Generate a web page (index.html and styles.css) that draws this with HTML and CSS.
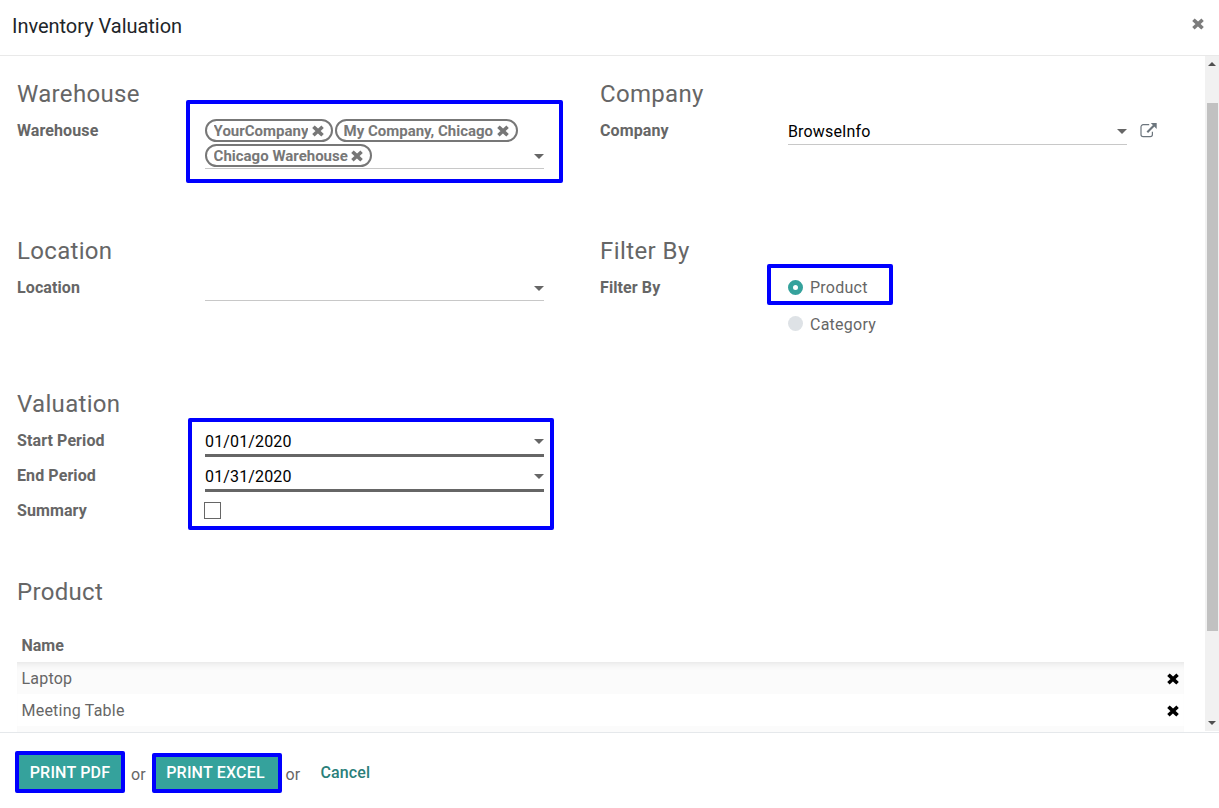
FILE: index.html
```html
<!DOCTYPE html>
<html lang="en">
<head>
<meta charset="utf-8">
<title>Inventory Valuation</title>
<link rel="stylesheet" href="styles.css">
</head>
<body>
<svg class="defs" width="0" height="0">
  <symbol id="times" viewBox="0 0 12 12"><path d="M2.7 2.9 9.3 9.1M9.3 2.9 2.7 9.1" fill="none" stroke="currentColor" stroke-width="3.5" stroke-linecap="square" stroke-linejoin="round"/></symbol>
  <symbol id="caret" viewBox="0 0 10 5"><path d="M0 0H10L5 5Z" fill="currentColor"/></symbol>
</svg>
<div class="modal">
  <header class="modal-header">
    <h4 class="modal-title">Inventory Valuation</h4>
    <svg class="icon close"><use href="#times"/></svg>
  </header>
  <main class="modal-body">
    <div class="sheet">
      <div class="groups">
        <section class="group group-first">
          <h2 class="group-title">Warehouse</h2>
          <div class="field">
            <label class="label">Warehouse</label>
            <div class="input tags">
              <span class="tag"><span class="tag-text">YourCompany</span><svg class="icon"><use href="#times"/></svg></span>
              <span class="tag"><span class="tag-text">My Company, Chicago</span><svg class="icon"><use href="#times"/></svg></span>
              <span class="tag"><span class="tag-text">Chicago Warehouse</span><svg class="icon"><use href="#times"/></svg></span>
              <svg class="caret tags-caret"><use href="#caret"/></svg>
            </div>
          </div>
          <div class="mark mark-warehouse"></div>
        </section>
        <section class="group">
          <h2 class="group-title">Company</h2>
          <div class="field">
            <label class="label">Company</label>
            <div class="input company"><span class="value browse">BrowseInfo</span><svg class="caret"><use href="#caret"/></svg></div>
            <svg class="external" viewBox="0 0 17 15"><path d="M9.2 1.7H3.2A2.2 2.2 0 0 0 1 3.900V11.500A2.200 2.200 0 0 0 3.200 13.700H10.200A2.200 2.200 0 0 0 12.400 11.500V8.800" fill="none" stroke="currentColor" stroke-width="1.200"/><path d="M7.300 9.200 14 2.500" stroke="currentColor" stroke-width="2.100"/><path d="M10.800 0H16.700V5.900Z" fill="currentColor"/></svg>
          </div>
        </section>
        <section class="group group-second">
          <h2 class="group-title">Location</h2>
          <div class="field">
            <label class="label">Location</label>
            <div class="input location"><svg class="caret"><use href="#caret"/></svg></div>
          </div>
        </section>
        <section class="group">
          <h2 class="group-title filter-title">Filter By</h2>
          <div class="field">
            <label class="label">Filter By</label>
            <div class="radios">
              <span class="radio"><i class="dot dot-on"></i><span class="radio-text">Product</span></span>
              <span class="radio"><i class="dot"></i><span class="radio-text">Category</span></span>
            </div>
          </div>
          <div class="mark mark-filter"></div>
        </section>
        <section class="group group-third">
          <h2 class="group-title">Valuation</h2>
          <div class="field">
            <label class="label">Start Period</label>
            <div class="input date"><span class="value">01/01/2020</span><svg class="caret"><use href="#caret"/></svg></div>
          </div>
          <div class="field">
            <label class="label">End Period</label>
            <div class="input date"><span class="value">01/31/2020</span><svg class="caret"><use href="#caret"/></svg></div>
          </div>
          <div class="field">
            <label class="label">Summary</label>
            <span class="checkbox"></span>
          </div>
          <div class="mark mark-dates"></div>
        </section>
      </div>
      <h2 class="group-title">Product</h2>
      <div class="table">
        <div class="head">Name</div>
        <div class="rows">
          <div class="row"><span class="cell">Laptop</span><svg class="icon"><use href="#times"/></svg></div>
          <div class="row"><span class="cell">Meeting Table</span><svg class="icon"><use href="#times"/></svg></div>
          <div class="row"></div>
        </div>
      </div>
    </div>
    <div class="scrollbar">
      <svg class="arrow" viewBox="0 0 8 4"><path d="M0 4 4 0 8 4Z"/></svg>
      <div class="thumb"></div>
      <svg class="arrow arrow-down" viewBox="0 0 8 4"><path d="M0 0 4 4 8 0Z"/></svg>
    </div>
  </main>
  <footer class="modal-footer">
    <button class="btn btn-pdf">PRINT PDF</button>
    <span class="or">or</span>
    <button class="btn btn-excel">PRINT EXCEL</button>
    <span class="or or-last">or</span>
    <a class="cancel">Cancel</a>
  </footer>
</div>
</body>
</html>
```
FILE: styles.css
```css
* { box-sizing: border-box; }
body { margin: 0; background: #fff; color: #666; font: 16px/24px Roboto, sans-serif; overflow: hidden; }
.defs { position: absolute; }
.modal { height: 808px; display: flex; flex-direction: column; }
.modal-header { height: 56px; border-bottom: 1px solid #e9e9e9; padding: 0 15px 4px 12px; display: flex; align-items: center; justify-content: space-between; }
.modal-title { margin: 0; font-size: 20px; font-weight: 400; color: #212529; letter-spacing: -.03px; }
.icon { width: 12px; height: 12px; flex: none; }
.close { color: #7c7c7c; margin-top: -4px; }
.modal-body { height: 676px; display: flex; overflow: hidden; }
.sheet { flex: 1; padding: 23px 21px 0 17px; }
.groups { display: grid; grid-template-columns: 583px 1fr; grid-template-rows: 157px 153px 188px; }
.group { position: relative; }
.group-title { margin: 0; height: 34px; line-height: 31px; font-size: 24px; letter-spacing: .32px; font-weight: 400; }
.filter-title { letter-spacing: .42px; }
.field { display: flex; height: 35px; }
.label { width: 188px; line-height: 35px; font-weight: 700; letter-spacing: .1px; }
.input { width: 339px; height: 32px; border-bottom: 1px solid #c8c8c8; display: flex; align-items: center; justify-content: space-between; color: #000; padding-top: 6px; letter-spacing: .15px; }
.company .caret { margin-top: -1px; }
.location { height: 31px; justify-content: flex-end; padding-top: 6px; }
.date { height: 34px; border-bottom: 3px solid #666; padding-top: 6px; }
.caret { width: 10px; height: 5px; color: #666; }
.tags { position: relative; height: 56px; flex-wrap: wrap; align-content: flex-start; justify-content: flex-start; gap: 2px; padding-top: 6px; letter-spacing: 0; }
.tag { height: 23px; border: 2px solid #777; border-radius: 12px; padding: 0 7px 0 6.6px; display: flex; align-items: center; gap: 3.5px; color: #777; font-size: 15px; font-weight: 700; }
.tag-text { height: 17px; line-height: 19px; overflow: hidden; }
.tags-caret { position: absolute; right: 0; bottom: 9px; }
.external { width: 17px; height: 15px; margin: 10px 0 0 13px; color: #6c757d; }
.radios { display: flex; flex-direction: column; gap: 11px; padding-top: 5px; }
.radio { display: flex; align-items: flex-start; height: 25px; gap: 7px; letter-spacing: .24px; }
.radio-text { line-height: 26px; }
.dot { width: 15px; height: 15px; margin-top: 5px; border-radius: 50%; background: #dee2e6; }
.radio:last-child .radio-text { line-height: 28px; }
.dot-on { background: #fff; border: 5px solid #35a29c; }
.checkbox { width: 17px; height: 17px; border: 1px solid #666; margin: 9px 0 0 -1px; }
.mark { position: absolute; border: 4px solid #00f; border-radius: 2px; }
.mark-warehouse { left: 169px; top: 21px; width: 377px; height: 83px; }
.mark-filter { left: 167px; top: 28px; width: 126px; height: 41px; }
.mark-dates { left: 171px; top: 29px; width: 366px; height: 112px; }
.table { padding-top: 18px; }
.head { height: 33px; line-height: 33px; padding-left: 4.5px; font-weight: 700; }
.rows { background: #fff; box-shadow: inset 0 7px 9px -7px #ddd; }
.row { height: 32px; padding: 0 5.5px 0 4.5px; display: flex; align-items: center; justify-content: space-between; letter-spacing: .22px; }
.row:nth-child(odd) { background: rgba(0,0,0,.014); }
.cell { line-height: 24px; padding-top: 2px; }
.row .icon { color: #000; margin-top: 1.5px; }
.scrollbar { width: 14px; height: 675px; background: #f1f1f1; display: flex; flex-direction: column; align-items: center; padding: 6px 0 6px; }
.arrow { width: 8px; height: 4px; fill: #505050; }
.thumb { width: 11px; height: 528px; margin: 37px 0 auto 1px; background: #c1c1c1; }
.modal-footer { flex: 1; border-top: 1px solid #e5e8eb; padding: 0 15px; display: flex; align-items: flex-end; padding-bottom: 15px; }
.btn { font: 500 16px/34px Roboto, sans-serif; letter-spacing: .2px; color: #fff; background: #35a29c; border: 4px solid #00f; border-radius: 2px; padding: 0; white-space: nowrap; }
.btn-pdf { width: 110px; height: 42px; padding-top: 1px; }
.btn-excel { width: 130px; height: 40px; line-height: 30px; padding-right: 3px; }
.or { width: 27px; padding-left: 6px; height: 30px; }
.or-last { width: 38.5px; padding-left: 3.5px; }
.cancel { color: #2b7f7a; font-weight: 500; height: 32px; letter-spacing: .12px; }
```
